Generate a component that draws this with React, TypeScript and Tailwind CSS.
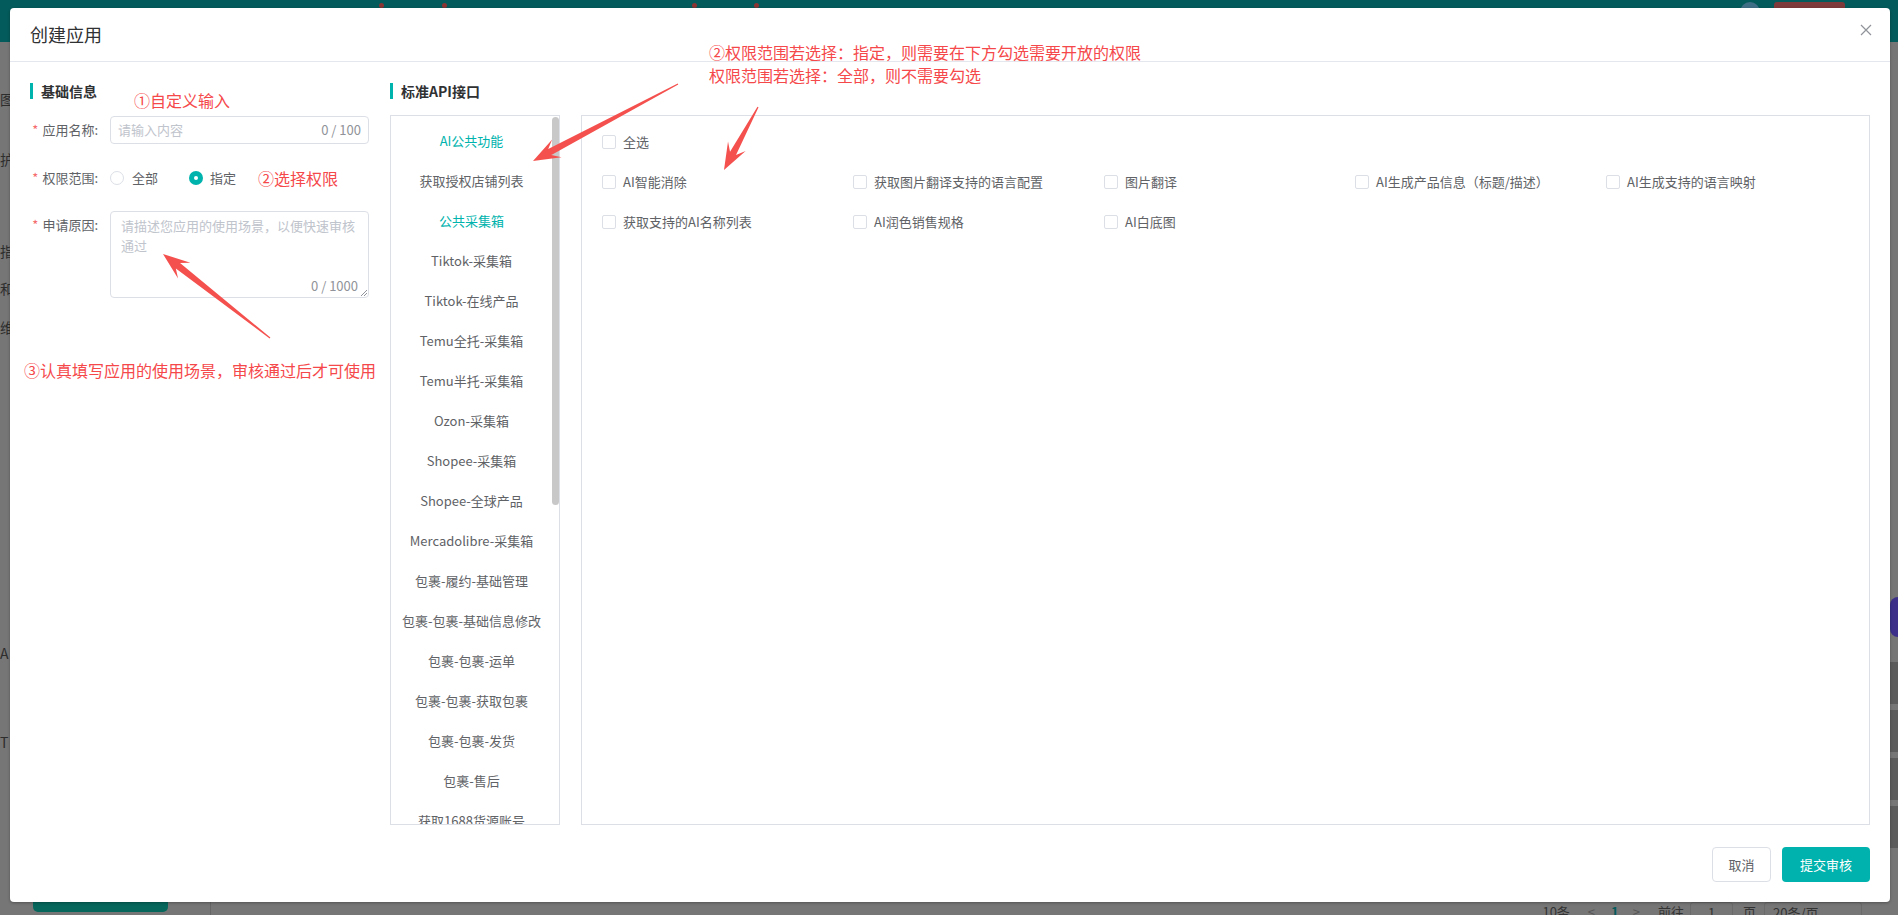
import React from 'react';

const categories = [
  { label: 'AI公共功能', active: true },
  { label: '获取授权店铺列表' },
  { label: '公共采集箱', active: true },
  { label: 'Tiktok-采集箱' },
  { label: 'Tiktok-在线产品' },
  { label: 'Temu全托-采集箱' },
  { label: 'Temu半托-采集箱' },
  { label: 'Ozon-采集箱' },
  { label: 'Shopee-采集箱' },
  { label: 'Shopee-全球产品' },
  { label: 'Mercadolibre-采集箱' },
  { label: '包裹-履约-基础管理' },
  { label: '包裹-包裹-基础信息修改' },
  { label: '包裹-包裹-运单' },
  { label: '包裹-包裹-获取包裹' },
  { label: '包裹-包裹-发货' },
  { label: '包裹-售后' },
  { label: '获取1688货源账号' },
];

const permissions = [
  'AI智能消除',
  '获取图片翻译支持的语言配置',
  '图片翻译',
  'AI生成产品信息（标题/描述）',
  'AI生成支持的语言映射',
  '获取支持的AI名称列表',
  'AI润色销售规格',
  'AI白底图',
];

// annotation arrows: [tailX, tailY, tipX, tipY]
const arrows: [number, number, number, number][] = [
  [678, 84, 533, 161],
  [758, 107, 724, 170],
  [270, 338, 163, 254],
];

function arrowPoints([x1, y1, x2, y2]: [number, number, number, number]) {
  const dx = x2 - x1;
  const dy = y2 - y1;
  const len = Math.hypot(dx, dy);
  const ux = dx / len;
  const uy = dy / len;
  const nx = -uy;
  const ny = ux;
  const pt = (d: number, w: number) => `${x2 - ux * d + nx * w},${y2 - uy * d + ny * w}`;
  return [
    `${x1 + nx * 0.6},${y1 + ny * 0.6}`,
    pt(19, 3.4),
    pt(27, 10),
    `${x2},${y2}`,
    pt(27, -10),
    pt(19, -3.4),
    `${x1 - nx * 0.6},${y1 - ny * 0.6}`,
  ].join(' ');
}

function Checkbox({ label }: { label: string }) {
  return (
    <div className="h-[40px] flex items-center">
      <span className="w-[14px] h-[14px] border border-[#dcdfe6] rounded-[2px] bg-white shrink-0" />
      <span className="ml-[7px] text-[13px] text-[#606266] whitespace-nowrap">{label}</span>
    </div>
  );
}

function SectionTitle({ children }: { children: React.ReactNode }) {
  return (
    <div className="h-[16px] flex items-center border-l-[3px] border-[#00b3ad] pl-[8px]">
      <span className="text-[14px] font-bold text-[#303133] leading-none">{children}</span>
    </div>
  );
}

function FormLabel({ children }: { children: React.ReactNode }) {
  return (
    <div className="w-[80px] pr-[12px] h-[28px] flex items-center justify-end text-[13px] text-[#606266] shrink-0">
      <span className="text-[#f56c6c] mr-[4px]">*</span>
      {children}
    </div>
  );
}

export default function App() {
  return (
    <div className="relative w-[1898px] h-[915px] overflow-hidden bg-[#767676] font-['Noto_Sans_CJK_SC','Noto_Sans',sans-serif]">
      {/* page behind the overlay */}
      <div className="flex flex-col h-full">
        <div className="h-[42px] bg-[#045b5b] flex items-start shrink-0">
          <div className="ml-[379px] mt-[3px] w-[5px] h-[5px] rounded-full bg-[#8a3434]" />
          <div className="ml-[58px] mt-[3px] w-[5px] h-[5px] rounded-full bg-[#8a3434]" />
          <div className="ml-[245px] mt-[3px] w-[5px] h-[5px] rounded-full bg-[#8a3434]" />
          <div className="ml-[57px] mt-[3px] w-[5px] h-[5px] rounded-full bg-[#8a3434]" />
          <div className="ml-auto mt-[2px] w-[20px] h-[20px] rounded-full bg-[#3f6f86]" />
          <div className="ml-[14px] mt-[2px] w-[71px] h-[22px] rounded-[3px] bg-[#7e3a3a] mr-[53px]" />
        </div>
        <div className="flex-1 flex">
          <div className="w-[10px] flex flex-col text-[14px] text-[#2d2d2d] leading-none">
            <span className="mt-[50px]">图</span>
            <span className="mt-[46px]">护</span>
            <span className="mt-[78px]">指</span>
            <span className="mt-[23px]">和</span>
            <span className="mt-[25px]">维</span>
            <span className="mt-[312px]">A</span>
            <span className="mt-[75px]">T</span>
          </div>
          <div className="flex-1 flex flex-col justify-end">
            <div className="h-[13px] flex items-start text-[13px] text-[#333] leading-[20px]">
              <div className="ml-[23px] w-[135px] h-[10px] rounded-b-[5px] bg-[#06675c]" />
              <div className="ml-[42px] w-px h-[13px] bg-[#666]" />
              <div className="ml-auto flex items-start">
                <span>10条</span>
                <span className="ml-[18px] text-[#555]">&lt;</span>
                <span className="ml-[16px] text-[#045b5b] font-bold">1</span>
                <span className="ml-[14px] text-[#555]">&gt;</span>
                <span className="ml-[18px]">前往</span>
                <span className="ml-[6px] w-[43px] h-[24px] border border-[#6a6a6a] rounded-[3px] text-center">1</span>
                <span className="ml-[10px]">页</span>
                <span className="ml-[8px] w-[98px] h-[24px] border border-[#6a6a6a] rounded-[3px] pl-[8px]">20条/页</span>
              </div>
              <div className="w-[28px]" />
            </div>
          </div>
          <div className="w-[8px] flex flex-col">
            <div className="mt-[555px] w-[8px] h-[40px] rounded-l-full bg-[#3b2f8a]" />
            <div className="mt-[25px] h-[42px] bg-[#5c5c5c]" />
            <div className="mt-[6px] h-[42px] bg-[#5c5c5c]" />
            <div className="mt-[6px] h-[42px] bg-[#5c5c5c]" />
            <div className="mt-[6px] h-[42px] bg-[#5c5c5c]" />
          </div>
        </div>
      </div>

      {/* dialog */}
      <div className="absolute left-[10px] top-[8px] w-[1880px] h-[894px] bg-white rounded-[4px] flex flex-col shadow-[0_1px_3px_rgba(0,0,0,0.3)]">
        <div className="h-[54px] shrink-0 border-b border-[#e4e7ed] flex items-center justify-between pl-[20px] pr-[18px]">
          <span className="text-[18px] text-[#303133]">创建应用</span>
          <svg className="self-start mt-[16px]" width="12" height="12" viewBox="0 0 12 12">
            <path d="M1 1L11 11M11 1L1 11" stroke="#909399" strokeWidth="1.2" />
          </svg>
        </div>

        <div className="flex px-[20px] pt-[21px]">
          <div className="w-[360px] shrink-0">
            <SectionTitle>基础信息</SectionTitle>
            <div className="mt-[17px] flex items-center">
              <FormLabel>应用名称:</FormLabel>
              <div className="w-[259px] h-[28px] border border-[#dcdfe6] rounded-[4px] flex items-center justify-between pl-[7px] pr-[7px] text-[13px]">
                <span className="text-[#c0c4cc]">请输入内容</span>
                <span className="text-[#909399]">0 / 100</span>
              </div>
            </div>
            <div className="mt-[20px] flex items-center">
              <FormLabel>权限范围:</FormLabel>
              <div className="flex items-center text-[13px] text-[#606266]">
                <span className="w-[14px] h-[14px] rounded-full border border-[#dcdfe6]" />
                <span className="ml-[8px]">全部</span>
                <span className="ml-[31px] w-[14px] h-[14px] rounded-full bg-[#00b3ad] flex items-center justify-center">
                  <span className="w-[4px] h-[4px] rounded-full bg-white" />
                </span>
                <span className="ml-[7px]">指定</span>
              </div>
            </div>
            <div className="mt-[19px] flex items-start">
              <FormLabel>申请原因:</FormLabel>
              <div className="relative w-[259px] h-[87px] border border-[#dcdfe6] rounded-[4px] pl-[10px] pr-[10px] pt-[4px] text-[13px] leading-[20px]">
                <span className="text-[#c0c4cc]">请描述您应用的使用场景，以便快速审核通过</span>
                <span className="absolute right-[10px] bottom-[1px] text-[#909399]">0 / 1000</span>
                <svg className="absolute right-[1px] bottom-[1px]" width="7" height="7" viewBox="0 0 7 7">
                  <path d="M1 7L7 1M4 7L7 4" stroke="#909399" strokeWidth="1" />
                </svg>
              </div>
            </div>
          </div>

          <div className="flex-1">
            <SectionTitle>标准API接口</SectionTitle>
            <div className="mt-[16px] flex gap-[21px]">
              <div className="relative w-[170px] h-[710px] border border-[#dcdfe6] overflow-hidden shrink-0">
                <div className="w-[161px] pt-[5px]">
                  {categories.map((c) => (
                    <div
                      key={c.label}
                      className={`h-[40px] flex items-center justify-center text-[13px] whitespace-nowrap ${
                        c.active ? 'text-[#00b3ad]' : 'text-[#606266]'
                      }`}
                    >
                      {c.label}
                    </div>
                  ))}
                </div>
                <div className="absolute right-0 top-px w-[7px] h-[388px] rounded-full bg-[#c8c8c8]" />
              </div>
              <div className="flex-1 h-[710px] border border-[#dcdfe6] pl-[20px] pt-[6px]">
                <Checkbox label="全选" />
                <div className="grid grid-cols-[repeat(5,251px)]">
                  {permissions.map((p) => (
                    <Checkbox key={p} label={p} />
                  ))}
                </div>
              </div>
            </div>
          </div>
        </div>

        <div className="flex justify-end px-[20px] mt-[22px]">
          <button className="w-[59px] h-[35px] border border-[#dcdfe6] rounded-[4px] bg-white text-[13px] text-[#606266]">
            取消
          </button>
          <button className="ml-[11px] w-[88px] h-[35px] rounded-[4px] bg-[#00b2ad] text-[13px] text-white">
            提交审核
          </button>
        </div>
      </div>

      {/* screenshot annotations */}
      <div className="absolute left-[134px] top-[89px] text-[16px] leading-[22px] text-[#f5484a]">①自定义输入</div>
      <div className="absolute left-[258px] top-[167px] text-[16px] leading-[22px] text-[#f5484a]">②选择权限</div>
      <div className="absolute left-[24px] top-[359px] text-[16px] leading-[22px] text-[#f5484a] whitespace-nowrap">
        ③认真填写应用的使用场景，审核通过后才可使用
      </div>
      <div className="absolute left-[709px] top-[41px] text-[16px] leading-[23px] text-[#f5484a] whitespace-nowrap">
        <div>②权限范围若选择：指定，则需要在下方勾选需要开放的权限</div>
        <div>权限范围若选择：全部，则不需要勾选</div>
      </div>
      <svg className="absolute left-0 top-0 pointer-events-none" width="1898" height="915">
        {arrows.map((a, i) => (
          <polygon key={i} points={arrowPoints(a)} fill="#f4514e" />
        ))}
      </svg>
    </div>
  );
}
